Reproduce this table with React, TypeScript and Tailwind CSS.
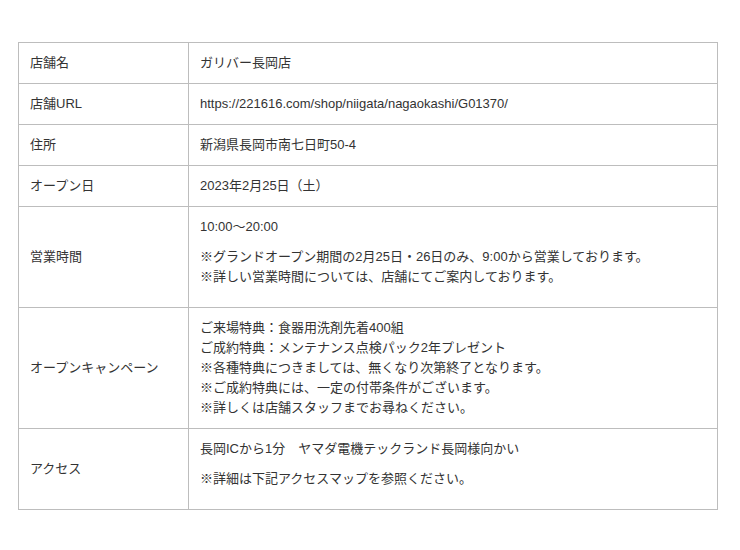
import React from "react";

type Row = { label: string; content: React.ReactNode };

const P = ({ children }: { children: React.ReactNode }) => (
  <p className="mb-[10px]">{children}</p>
);

const rows: Row[] = [
  { label: "店舗名", content: <p>ガリバー長岡店</p> },
  { label: "店舗URL", content: <p>https://221616.com/shop/niigata/nagaokashi/G01370/</p> },
  { label: "住所", content: <p>新潟県長岡市南七日町50-4</p> },
  { label: "オープン日", content: <p>2023年2月25日（土）</p> },
  {
    label: "営業時間",
    content: (
      <>
        <P>10:00～20:00</P>
        <P>
          ※グランドオープン期間の2月25日・26日のみ、9:00から営業しております。
          <br />
          ※詳しい営業時間については、店舗にてご案内しております。
        </P>
      </>
    ),
  },
  {
    label: "オープンキャンペーン",
    content: (
      <p>
        ご来場特典：食器用洗剤先着400組
        <br />
        ご成約特典：メンテナンス点検パック2年プレゼント
        <br />
        ※各種特典につきましては、無くなり次第終了となります。
        <br />
        ※ご成約特典には、一定の付帯条件がございます。
        <br />
        ※詳しくは店舗スタッフまでお尋ねください。
      </p>
    ),
  },
  {
    label: "アクセス",
    content: (
      <>
        <P>長岡ICから1分　ヤマダ電機テックランド長岡様向かい</P>
        <P>※詳細は下記アクセスマップを参照ください。</P>
      </>
    ),
  },
];

export default function App() {
  return (
    <div
      className="w-[740px] h-[550px] bg-white pt-[42px] pl-[18px] text-[13px] leading-[20px] text-[#333333]"
      style={{ fontFamily: '"Liberation Sans", "Noto Sans CJK JP", sans-serif' }}
    >
      <div className="grid w-[700px] grid-cols-[170px_529px] border-l border-t border-[#bdbdbd]">
        {rows.map((r) => (
          <React.Fragment key={r.label}>
            <div className="flex items-center border-b border-r border-[#bdbdbd] px-[11px] py-[10px]">
              {r.label}
            </div>
            <div className="border-b border-r border-[#bdbdbd] px-[11px] py-[10px]">
              {r.content}
            </div>
          </React.Fragment>
        ))}
      </div>
    </div>
  );
}
